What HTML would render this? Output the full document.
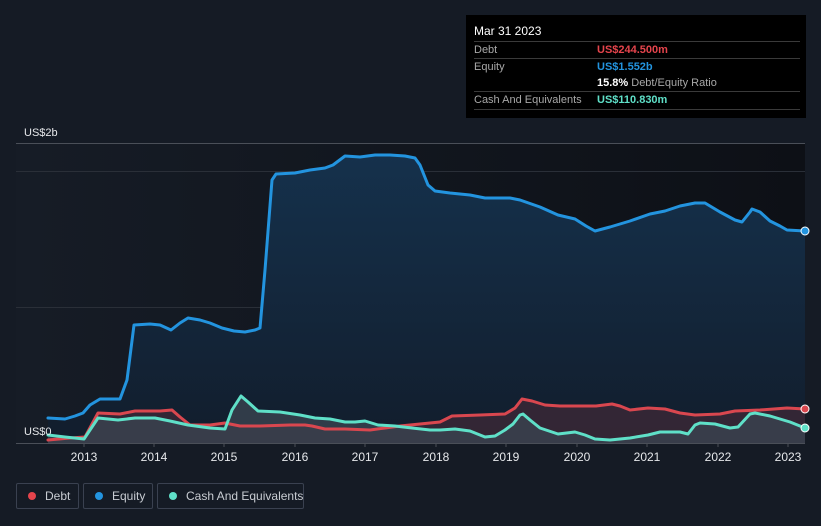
<!DOCTYPE html>
<html><head><meta charset="utf-8"><style>
body{margin:0;width:821px;height:526px;background:#151b25;font-family:"Liberation Sans",sans-serif;overflow:hidden;position:relative}
.tt{position:absolute;left:466px;top:15px;width:340px;height:103px;background:#000;color:#fff;font-size:11px}
.tt .r{position:absolute;left:8px;right:6px;border-top:1px solid #3a3a3a;height:17px;line-height:17px}
.tt .l{color:#a8a8a8;position:absolute;left:0}
.tt .v{position:absolute;left:123px;font-weight:bold;white-space:nowrap}
.lg{position:absolute;top:483px;height:26px;border:1px solid #3a4150;border-radius:2px;box-sizing:border-box;color:#c8ccd2;font-size:12px;line-height:24px;white-space:nowrap}
.lg i{position:absolute;left:11px;top:8px;width:8px;height:8px;border-radius:50%}
.lg span{position:absolute;left:28px;white-space:nowrap}
</style></head><body>
<svg width="821" height="526" style="position:absolute;left:0;top:0">
<defs>
<linearGradient id="bg" x1="0" x2="1"><stop offset="0" stop-color="#161c26"/><stop offset="1" stop-color="#0d1016"/></linearGradient>
<linearGradient id="eq" x1="0" y1="0" x2="0" y2="1"><stop offset="0" stop-color="#15314c"/><stop offset="1" stop-color="#121d2c"/></linearGradient>
</defs>
<rect x="16" y="143" width="789" height="300" fill="url(#bg)"/>
<line x1="16" y1="143.5" x2="805" y2="143.5" stroke="#4a4f58"/>
<line x1="16" y1="171.5" x2="805" y2="171.5" stroke="#2a2f38"/>
<line x1="16" y1="307.5" x2="805" y2="307.5" stroke="#2a2f38"/>
<path d="M48,418 L65,419 75,416 83,413 90,405 100,399 120,399 127,380 134,325 150,324 160,325 171,330 180,323 188,318 200,320 210,323 222,328 234,331 245,332 255,330 260,328 265,270 272,180 276,174 295,173 310,170 325,168 333,165 345,156 360,157 375,155 390,155 405,156 415,158 420,165 428,185 435,191 450,193 470,195 485,198 510,198 520,200 540,207 558,215 575,219 586,226 595,231 610,227 630,221 650,214 665,211 680,206 695,203 705,203 720,212 735,220 742,222 750,212 752,209 760,212 770,221 780,226 787,230 805,231 L805,443 L48,443Z" fill="url(#eq)"/>
<path d="M48,440 L70,438 85,437 98,413 120,414 135,411 160,411 172,410 180,417 190,425 210,425 225,423 240,426 260,426 290,425 305,425 312,426 325,429 345,429 370,430 385,428 400,426 420,424 440,422 452,416 480,415 505,414 515,408 522,399 532,401 545,405 560,406 596,406 612,404 620,406 630,410 648,408 665,409 680,413 695,415 720,414 735,411 760,410 787,408 805,409 L805,443 L48,443Z" fill="#3a2836" opacity="0.85"/>
<path d="M48,435 L65,437 84,439 98,418 118,420 135,418 155,418 170,421 188,425 210,428 225,429 232,410 241,396 248,402 258,411 280,412 300,415 315,418 330,419 345,422 355,422 365,421 378,425 395,426 412,428 430,430 440,430 455,429 470,431 485,437 495,436 505,430 513,424 520,415 523,414 530,420 540,428 558,434 575,432 585,435 595,439 610,440 630,438 648,435 660,432 680,432 688,434 695,425 700,423 715,424 730,428 738,427 750,414 755,413 770,416 790,422 805,428 L805,443 L48,443Z" fill="#3a4450" opacity="0.8"/>
<g fill="none" stroke-width="3" stroke-linejoin="round" stroke-linecap="round">
<path stroke="#2394df" d="M48,418 L65,419 75,416 83,413 90,405 100,399 120,399 127,380 134,325 150,324 160,325 171,330 180,323 188,318 200,320 210,323 222,328 234,331 245,332 255,330 260,328 265,270 272,180 276,174 295,173 310,170 325,168 333,165 345,156 360,157 375,155 390,155 405,156 415,158 420,165 428,185 435,191 450,193 470,195 485,198 510,198 520,200 540,207 558,215 575,219 586,226 595,231 610,227 630,221 650,214 665,211 680,206 695,203 705,203 720,212 735,220 742,222 750,212 752,209 760,212 770,221 780,226 787,230 805,231"/>
<path stroke="#d9474f" d="M48,440 L70,438 85,437 98,413 120,414 135,411 160,411 172,410 180,417 190,425 210,425 225,423 240,426 260,426 290,425 305,425 312,426 325,429 345,429 370,430 385,428 400,426 420,424 440,422 452,416 480,415 505,414 515,408 522,399 532,401 545,405 560,406 596,406 612,404 620,406 630,410 648,408 665,409 680,413 695,415 720,414 735,411 760,410 787,408 805,409"/>
<path stroke="#5fe0c8" d="M48,435 L65,437 84,439 98,418 118,420 135,418 155,418 170,421 188,425 210,428 225,429 232,410 241,396 248,402 258,411 280,412 300,415 315,418 330,419 345,422 355,422 365,421 378,425 395,426 412,428 430,430 440,430 455,429 470,431 485,437 495,436 505,430 513,424 520,415 523,414 530,420 540,428 558,434 575,432 585,435 595,439 610,440 630,438 648,435 660,432 680,432 688,434 695,425 700,423 715,424 730,428 738,427 750,414 755,413 770,416 790,422 805,428"/>
</g>
<circle cx="805" cy="231" r="4" fill="#2394df" stroke="#fff" stroke-width="1"/>
<circle cx="805" cy="409" r="4" fill="#d9474f" stroke="#fff" stroke-width="1"/>
<circle cx="805" cy="428" r="4" fill="#5fe0c8" stroke="#fff" stroke-width="1"/>
<line x1="16" y1="443.5" x2="805" y2="443.5" stroke="#4a4f58"/>
<g stroke="#4a4f58">
<line x1="84" y1="443" x2="84" y2="447"/><line x1="154" y1="443" x2="154" y2="447"/><line x1="224" y1="443" x2="224" y2="447"/><line x1="295" y1="443" x2="295" y2="447"/><line x1="365" y1="443" x2="365" y2="447"/><line x1="436" y1="443" x2="436" y2="447"/><line x1="506" y1="443" x2="506" y2="447"/><line x1="577" y1="443" x2="577" y2="447"/><line x1="647" y1="443" x2="647" y2="447"/><line x1="718" y1="443" x2="718" y2="447"/><line x1="788" y1="443" x2="788" y2="447"/>
</g>
<g fill="#e6e8eb" font-size="12" font-family="Liberation Sans,sans-serif" text-anchor="middle">
<text x="84" y="461">2013</text><text x="154" y="461">2014</text><text x="224" y="461">2015</text><text x="295" y="461">2016</text><text x="365" y="461">2017</text><text x="436" y="461">2018</text><text x="506" y="461">2019</text><text x="577" y="461">2020</text><text x="647" y="461">2021</text><text x="718" y="461">2022</text><text x="788" y="461">2023</text>
</g>
<g fill="#e6e8eb" font-size="11" font-family="Liberation Sans,sans-serif">
<text x="24" y="136">US$2b</text><text x="24" y="435">US$0</text>
</g>
</svg>
<div class="tt">
<div style="position:absolute;left:8px;top:9px;font-size:12px">Mar 31 2023</div>
<div class="r" style="top:26px"><span class="l">Debt</span><span class="v" style="color:#e5444c">US$244.500m</span></div>
<div class="r" style="top:43px"><span class="l">Equity</span><span class="v" style="color:#2394df">US$1.552b</span></div>
<div class="r" style="top:60px;border-top:none"><span class="v" style="color:#fff">15.8% <span style="color:#a8a8a8;font-weight:normal">Debt/Equity Ratio</span></span></div>
<div class="r" style="top:76px;border-bottom:1px solid #3a3a3a"><span class="l">Cash And Equivalents</span><span class="v" style="color:#5fe0c8">US$110.830m</span></div>
</div>
<div class="lg" style="left:16px;width:63px"><i style="background:#e5444c"></i><span>Debt</span></div>
<div class="lg" style="left:83px;width:70px"><i style="background:#2394df"></i><span>Equity</span></div>
<div class="lg" style="left:157px;width:147px"><i style="background:#5fe0c8"></i><span>Cash And Equivalents</span></div>
</body></html>
